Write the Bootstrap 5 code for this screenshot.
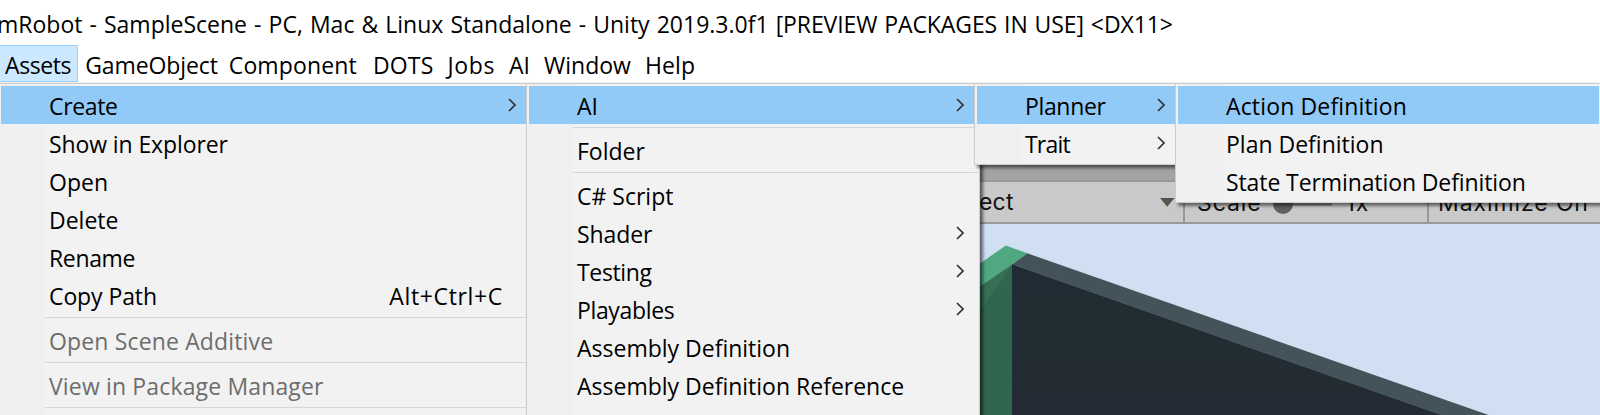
<!DOCTYPE html>
<html lang="en">
<head>
<meta charset="utf-8">
<meta name="viewport" content="width=device-width, initial-scale=1">
<title>Unity 2019.3.0f1</title>
<link href="https://cdn.jsdelivr.net/npm/bootstrap@5.3.0/dist/css/bootstrap.min.css" rel="stylesheet">
<style>
  body { font-family: "Open Sans", "Noto Sans", sans-serif; font-size: 23px; line-height: 38px; color: #000; background: #fff; }
  .window { height: 415px; }
  .titlebar { height: 45px; padding-top: 5px; word-spacing: 1.1px; }
  .titlebar > span { margin-left: -3px; }
  .menubar { height: 38px; border-bottom: 1px solid #f0f0f0; }
  .menubar .nav-link { padding: 1px 7px 0; height: 37px; line-height: 39px; color: #000; }
  .menubar .nav-link.active { background: #cce8ff; border: 1px solid #99d1ff; border-left: 0; padding: 0 6px 0 5px; letter-spacing: -.4px; }
  .popup { top: 83px; display: block; margin: 0; padding: 2px 0 2px 2px; border: 1px solid #ccc; border-radius: 0; min-width: 0;
    font-size: 23px; color: #000; background: linear-gradient(90deg, #f0f0f0 46px, #f2f2f2 46px); }
  .popup .dropdown-item { display: flex; align-items: center; justify-content: space-between; height: 38px; padding: 2px 15px 0 48px; line-height: 38px; color: #000; }
  .popup .dropdown-item.active { background: #91c9f7; }
  .popup .dropdown-item.disabled { color: #6d6d6d; }
  .popup .dropdown-divider { height: 7px; margin: 0 0 0 44px; border: 0; opacity: 1; background: linear-gradient(#d7d7d7, #d7d7d7) 0 3px / 100% 1px no-repeat; }
  .chev { width: 8px; height: 14px; fill: none; stroke: #333; stroke-width: 1.7; margin-bottom: 2px; }
  .m-assets { left: -2px; width: 529px; height: 340px; }
  .m-assets .dropdown-item { padding-right: 10px; }
  .m-assets .has-key { padding-right: 23px; }
  .m-create { left: 526px; width: 454px; height: 340px; box-shadow: 3px 3px 3px rgba(0,0,0,.55); }
  .m-ai { left: 974px; width: 203px; box-shadow: 3px 3px 3px rgba(0,0,0,.5); }
  .m-ai .dropdown-item { padding-right: 11px; }
  .m-planner { left: 1175px; width: 425px; border-right-color: #f2f2f2; box-shadow: 3px 3px 3px rgba(0,0,0,.5); }
  .ls-tighter { letter-spacing: -.8px; }
  .ls-tight { letter-spacing: -.35px; }
  .ls-snug { letter-spacing: -.1px; }
  .ls-loose { letter-spacing: .15px; }
  .ls-wide { letter-spacing: .65px; }
  .tabs-strip { height: 99px; background: #a3a3a3; border-bottom: 2px solid #999; border-top: 1px solid #ccc; }
  .toolbar { height: 42px; background: #c9c9c9; border-bottom: 2px solid #999; font-family: Inter, sans-serif; font-size: 23px; line-height: 43px; color: #111; padding-left: 979px; }
  .cell { border-right: 2px solid #999; }
  .cell-display { width: 206px; letter-spacing: .2px; }
  .cell-scale { width: 244px; padding-left: 12px; letter-spacing: .9px; }
  .cell-max { padding-left: 9px; letter-spacing: .9px; }
  .scene { background: #d1dff2; }
</style>
</head>
<body>
<div class="window position-relative overflow-hidden d-flex flex-column">
  <header class="titlebar text-nowrap flex-shrink-0"><span>mRobot - SampleScene - PC, Mac &amp; Linux Standalone - Unity 2019.3.0f1 <span class="ls-snug">[PREVIEW PACKAGES IN USE] &lt;DX11&gt;</span></span></header>
  <nav class="menubar nav flex-nowrap flex-shrink-0">
    <a class="nav-link active">Assets</a><a class="nav-link ls-snug">GameObject</a><a class="nav-link ls-loose pe-1 ps-1">Component</a><a class="nav-link ps-2 ms-1 ls-loose">DOTS</a><a class="nav-link ls-wide">Jobs</a><a class="nav-link">AI</a><a class="nav-link">Window</a><a class="nav-link ls-loose">Help</a>
  </nav>
  <div class="tabs-strip flex-shrink-0"></div>
  <div class="toolbar d-flex flex-shrink-0">
    <div class="cell cell-display d-flex align-items-center justify-content-between"><span>ect</span>
      <svg width="16" height="9" class="me-2"><path d="M1 0H15.500L8.200 8.800Z" fill="#555549"/></svg></div>
    <div class="cell cell-scale d-flex"><span>Scale</span>
      <svg width="64" height="40" class="ms-2"><path d="M10 22.500H62" stroke="#777" stroke-width="2"/><circle cx="13" cy="22" r="10" fill="#606060"/></svg><span class="ms-2 ps-1">1x</span></div>
    <div class="cell-max text-nowrap">Maximize On</div>
  </div>
  <div class="scene flex-grow-1">
    <svg class="d-block" width="1600" height="191" viewBox="0 224 1600 191">
      <defs><linearGradient id="wall" x1="0" y1="0" x2="0" y2="1"><stop offset="0" stop-color="#212b33"/><stop offset=".45" stop-color="#222d33"/><stop offset="1" stop-color="#242a33"/></linearGradient></defs>
      <path d="M970 270.500L1005.800 245.500L1027.500 253.300L1012.300 264.500L970 294Z" fill="#50a880"/>
      <path d="M1012.300 264.500V415H970V294Z" fill="#306650"/>
      <path d="M1012.300 264.500L980 311V286.500Z" fill="#366f56"/>
      <path d="M1012 264L1445 416H1012Z" fill="url(#wall)"/>
      <path d="M1027.300 253.300L1490 415.500H1442.500L1012.300 264.500Z" fill="#445359"/>
    </svg>
  </div>

  <div class="popup dropdown-menu m-assets">
    <a class="dropdown-item active ls-tight">Create<svg class="chev" viewBox="0 0 8 14"><path d="M1 1L7 7L1 13"/></svg></a>
    <a class="dropdown-item ls-snug">Show in Explorer</a>
    <a class="dropdown-item">Open</a>
    <a class="dropdown-item">Delete</a>
    <a class="dropdown-item ls-tight">Rename</a>
    <a class="dropdown-item has-key"><span class="ls-snug">Copy Path</span><span class="ls-wide">Alt+Ctrl+C</span></a>
    <hr class="dropdown-divider">
    <a class="dropdown-item disabled ls-loose">Open Scene Additive</a>
    <hr class="dropdown-divider">
    <a class="dropdown-item disabled ls-loose">View in Package Manager</a>
    <hr class="dropdown-divider">
  </div>

  <div class="popup dropdown-menu m-create">
    <a class="dropdown-item active">AI<svg class="chev" viewBox="0 0 8 14"><path d="M1 1L7 7L1 13"/></svg></a>
    <hr class="dropdown-divider">
    <a class="dropdown-item">Folder</a>
    <hr class="dropdown-divider">
    <a class="dropdown-item">C# Script</a>
    <a class="dropdown-item ls-snug">Shader<svg class="chev" viewBox="0 0 8 14"><path d="M1 1L7 7L1 13"/></svg></a>
    <a class="dropdown-item ls-tight">Testing<svg class="chev" viewBox="0 0 8 14"><path d="M1 1L7 7L1 13"/></svg></a>
    <a class="dropdown-item ls-tight">Playables<svg class="chev" viewBox="0 0 8 14"><path d="M1 1L7 7L1 13"/></svg></a>
    <a class="dropdown-item">Assembly Definition</a>
    <a class="dropdown-item">Assembly Definition Reference</a>
  </div>

  <div class="popup dropdown-menu m-ai">
    <a class="dropdown-item active ls-tight">Planner<svg class="chev" viewBox="0 0 8 14"><path d="M1 1L7 7L1 13"/></svg></a>
    <a class="dropdown-item ls-tighter">Trait<svg class="chev" viewBox="0 0 8 14"><path d="M1 1L7 7L1 13"/></svg></a>
  </div>

  <div class="popup dropdown-menu m-planner">
    <a class="dropdown-item active ls-loose">Action Definition</a>
    <a class="dropdown-item">Plan Definition</a>
    <a class="dropdown-item ls-snug">State Termination Definition</a>
  </div>
</div>
<script src="https://cdn.jsdelivr.net/npm/bootstrap@5.3.0/dist/js/bootstrap.bundle.min.js"></script>
</body>
</html>
